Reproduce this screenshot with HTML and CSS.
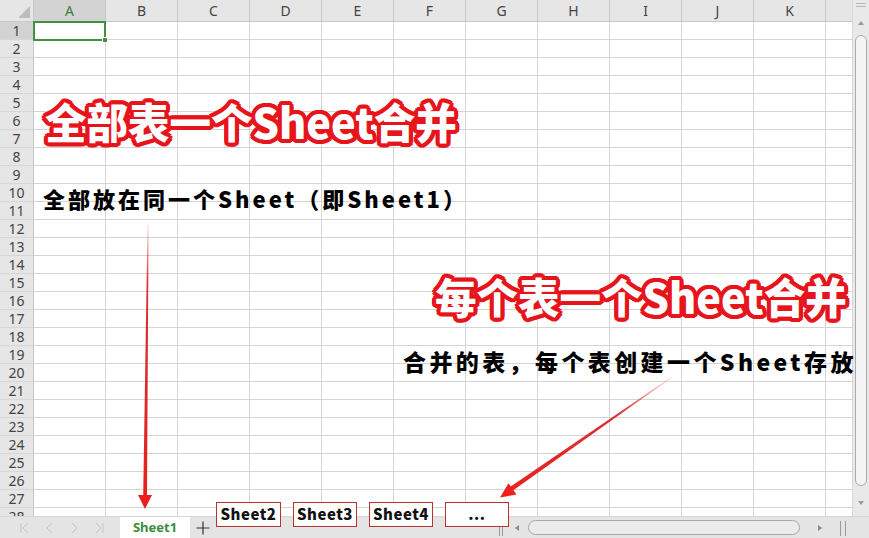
FILE: index.html
```html
<!DOCTYPE html>
<html lang="zh-CN">
<head>
<meta charset="utf-8">
<title>Sheet</title>
<link rel="stylesheet" href="styles.css">
</head>
<body>
<div class="app">
  <div class="main">
    <div class="sheet">
      <div class="corner"><span class="corner-tri"></span></div>
      <div class="col-headers">
        <div class="ch sel">A</div><div class="ch">B</div><div class="ch">C</div><div class="ch">D</div>
        <div class="ch">E</div><div class="ch">F</div><div class="ch">G</div><div class="ch">H</div>
        <div class="ch">I</div><div class="ch">J</div><div class="ch">K</div><div class="ch last"></div>
      </div>
      <div class="row-headers">
        <div class="rh sel">1</div><div class="rh">2</div><div class="rh">3</div><div class="rh">4</div>
        <div class="rh">5</div><div class="rh">6</div><div class="rh">7</div><div class="rh">8</div>
        <div class="rh">9</div><div class="rh">10</div><div class="rh">11</div><div class="rh">12</div>
        <div class="rh">13</div><div class="rh">14</div><div class="rh">15</div><div class="rh">16</div>
        <div class="rh">17</div><div class="rh">18</div><div class="rh">19</div><div class="rh">20</div>
        <div class="rh">21</div><div class="rh">22</div><div class="rh">23</div><div class="rh">24</div>
        <div class="rh">25</div><div class="rh">26</div><div class="rh">27</div><div class="rh">28</div>
      </div>
      <div class="cells">
        <div class="selection"><span class="handle"></span></div>
      </div>
    </div>
    <div class="vscroll">
      <div class="vsplit"></div>
      <div class="varrow up"></div>
      <div class="vthumb"></div>
      <div class="varrow down"></div>
    </div>
  </div>
  <div class="tabbar">
    <div class="nav">
      <svg class="nav-ic" width="25" height="12" viewBox="0 0 25 12"><path d="M9 1v10M16 1l-5 5 5 5" fill="none" stroke="#c6c6c6" stroke-width="1"/></svg>
      <svg class="nav-ic" width="25" height="12" viewBox="0 0 25 12"><path d="M15 1l-5 5 5 5" fill="none" stroke="#c6c6c6" stroke-width="1"/></svg>
      <svg class="nav-ic" width="25" height="12" viewBox="0 0 25 12"><path d="M10 1l5 5-5 5" fill="none" stroke="#c6c6c6" stroke-width="1"/></svg>
      <svg class="nav-ic" width="25" height="12" viewBox="0 0 25 12"><path d="M9 1l5 5-5 5M16 1v10" fill="none" stroke="#c6c6c6" stroke-width="1"/></svg>
    </div>
    <div class="tab active">Sheet1</div>
    <div class="add"><svg width="14" height="14" viewBox="0 0 14 14"><path d="M7 0.5v13M0.5 7h13" stroke="#333" stroke-width="1.2"/></svg></div>
    <div class="spacer"></div>
    <div class="hsplit"></div>
    <div class="harrow left"></div>
    <div class="hthumb"></div>
    <div class="harrow right"></div>
    <div class="hend"></div>
  </div>

  <div class="note title t1">全部表一个Sheet合并</div>
  <div class="note sub s1">全部放在同一个Sheet（即Sheet1）</div>
  <div class="note title t2">每个表一个Sheet合并</div>
  <div class="note sub s2">合并的表，每个表创建一个Sheet存放</div>

  <div class="boxtab b2">Sheet2</div>
  <div class="boxtab b3">Sheet3</div>
  <div class="boxtab b4">Sheet4</div>
  <div class="boxtab b5">...</div>

  <svg class="arrows" width="869" height="538" viewBox="0 0 869 538">
    <defs>
      <linearGradient id="ga" x1="0" y1="225" x2="0" y2="508" gradientUnits="userSpaceOnUse">
        <stop offset="0" stop-color="#e8201c" stop-opacity="0.15"/>
        <stop offset="0.2" stop-color="#d41a1a" stop-opacity="0.9"/>
        <stop offset="1" stop-color="#e8201c"/>
      </linearGradient>
      <linearGradient id="gb" x1="672" y1="377" x2="500" y2="497" gradientUnits="userSpaceOnUse">
        <stop offset="0" stop-color="#e8201c" stop-opacity="0.15"/>
        <stop offset="0.3" stop-color="#d41a1a" stop-opacity="0.9"/>
        <stop offset="1" stop-color="#ee2020"/>
      </linearGradient>
    </defs>
    <polygon fill="url(#ga)" points="147.5,225 148.6,225 147,496 143.2,496"/>
    <polygon fill="#ea1f1c" points="138,495 152,495 145,509"/>
    <polygon fill="url(#gb)" points="672.3,377.3 671.7,376.7 510,487 512.6,490.8"/>
    <polygon fill="#ee2020" points="516.5,494.6 508.5,483.2 500,497.5"/>
  </svg>
</div>
</body>
</html>
```
FILE: styles.css
```css
* { box-sizing: border-box; }
html, body { margin: 0; padding: 0; }
body {
  width: 869px;
  height: 538px;
  overflow: hidden;
  background: #ffffff;
  font-family: "Noto Sans", "Noto Sans CJK SC", sans-serif;
}
.app {
  position: relative;
  width: 869px;
  height: 538px;
  display: flex;
  flex-direction: column;
}
.main {
  height: 516px;
  display: flex;
  overflow: hidden;
}
.sheet {
  width: 852px;
  display: grid;
  grid-template-columns: 34px 1fr;
  grid-template-rows: 22px 1fr;
  overflow: hidden;
}
.corner {
  background: #e6e6e6;
  border-right: 1px solid #c8c8c8;
  border-bottom: 1px solid #c8c8c8;
  position: relative;
}
.corner-tri {
  position: absolute;
  right: 3px;
  bottom: 3px;
  width: 0;
  height: 0;
  border-left: 12px solid transparent;
  border-bottom: 12px solid #bdbdbd;
}
.col-headers {
  display: flex;
  background: #e6e6e6;
  border-bottom: 1px solid #c8c8c8;
}
.ch {
  flex: 0 0 72px;
  border-right: 1px solid #c8c8c8;
  text-align: center;
  font-size: 14px;
  line-height: 21px;
  color: #444;
}
.ch.last { flex: 1 0 26px; border-right: none; }
.ch.sel { background: #d3d3d3; color: #3a7d3a; border-bottom: 2px solid #d3d3d3; }
.row-headers {
  display: flex;
  flex-direction: column;
  background: #e6e6e6;
  border-right: 1px solid #c8c8c8;
}
.rh {
  flex: 0 0 18px;
  height: 18px;
  font-size: 14px;
  line-height: 17px;
  text-align: center;
  color: #444;
  border-bottom: 1px solid #d6d6d6;
}
.rh.sel { background: #d3d3d3; }
.cells {
  position: relative;
  background-image:
    repeating-linear-gradient(to right, transparent 0 71px, #d4d4d4 71px 72px),
    repeating-linear-gradient(to bottom, transparent 0 17px, #d4d4d4 17px 18px);
}
.selection {
  position: absolute;
  left: -1px;
  top: -1px;
  width: 73px;
  height: 20px;
  border: 2px solid #3f9140;
}
.handle {
  position: absolute;
  right: -4px;
  bottom: -4px;
  width: 6px;
  height: 6px;
  background: #3f9140;
  border: 1px solid #fff;
}
.vscroll {
  width: 17px;
  background: #e9e9e9;
  border-left: 1px solid #d8d8d8;
  display: flex;
  flex-direction: column;
  align-items: center;
  padding-top: 3px;
}
.vsplit {
  width: 10px;
  height: 4px;
  border-top: 1px solid #b8b8b8;
  border-bottom: 1px solid #b8b8b8;
  margin-bottom: 14px;
}
.varrow {
  width: 0;
  height: 0;
  border-left: 3px solid transparent;
  border-right: 3px solid transparent;
}
.varrow.up { border-bottom: 4px solid #999; margin-bottom: 10px; }
.varrow.down { border-top: 4px solid #999; margin-top: 15px; }
.vthumb {
  width: 12px;
  height: 451px;
  background: #f4f4f4;
  border: 1px solid #ababab;
  border-radius: 6px;
}
.tabbar {
  height: 22px;
  display: flex;
  align-items: stretch;
  background: #e4e4e4;
  border-top: 1px solid #d6d6d6;
}
.nav {
  width: 120px;
  display: flex;
  align-items: center;
  padding-left: 12px;
}
.nav-ic { display: block; }
.tab {
  width: 70px;
  background: #ffffff;
  text-align: center;
  font-weight: 700;
  font-size: 13px;
  line-height: 21px;
  color: #3b8c3b;
}
.add {
  width: 26px;
  display: flex;
  align-items: center;
  justify-content: center;
}
.add svg { display: block; }
.spacer { flex: 1; }
.hsplit {
  width: 4px;
  margin: 4px 3px 2px;
  border-left: 1px solid #9a9a9a;
  border-right: 1px solid #9a9a9a;
}
.harrow {
  width: 22px;
  display: flex;
  align-items: center;
  justify-content: center;
}
.harrow::before {
  content: "";
  width: 0;
  height: 0;
  border-top: 3px solid transparent;
  border-bottom: 3px solid transparent;
}
.harrow.left::before { border-right: 4px solid #8a8a8a; }
.harrow.right { width: 40px; }
.harrow.right::before { border-left: 4px solid #8a8a8a; }
.hthumb {
  width: 272px;
  margin: 3px 0;
  background: #ebebeb;
  border: 1px solid #a8a8a8;
  border-radius: 8px;
}
.hend {
  width: 6px;
  margin: 4px 23px 2px 0;
  border-left: 1px solid #9a9a9a;
  border-right: 1px solid #9a9a9a;
}
.note {
  position: absolute;
  white-space: nowrap;
  line-height: 1;
  font-family: "Noto Sans CJK SC", "Noto Sans", sans-serif;
}
.title {
  font-size: 41.5px;
  font-weight: 900;
  color: #ffffff;
  text-shadow:
    4px 0 0 #e8141c, -4px 0 0 #e8141c, 0 4px 0 #e8141c, 0 -4px 0 #e8141c,
    3px 3px 0 #e8141c, -3px 3px 0 #e8141c, 3px -3px 0 #e8141c, -3px -3px 0 #e8141c,
    4px 1.5px 0 #e8141c, -4px 1.5px 0 #e8141c, 4px -1.5px 0 #e8141c, -4px -1.5px 0 #e8141c,
    1.5px 4px 0 #e8141c, -1.5px 4px 0 #e8141c, 1.5px -4px 0 #e8141c, -1.5px -4px 0 #e8141c,
    2px 0 0 #e8141c, -2px 0 0 #e8141c, 0 2px 0 #e8141c, 0 -2px 0 #e8141c;
}
.t1 { left: 45px; top: 101px; }
.t2 { left: 435px; top: 276px; }
.sub {
  font-size: 22px;
  font-weight: 900;
  color: #000;
  letter-spacing: 3px;
}
.s1 { left: 43px; top: 187px; }
.s2 { left: 403px; top: 350px; font-size: 23px; letter-spacing: 3.4px; }
.boxtab {
  position: absolute;
  top: 502px;
  height: 25px;
  background: #ffffff;
  border: 1px solid #b83232;
  font-family: "Noto Sans CJK SC", "Noto Sans", sans-serif;
  font-weight: 900;
  font-size: 15px;
  letter-spacing: 0.5px;
  line-height: 21px;
  text-align: center;
  color: #111;
}
.b2 { left: 216px; width: 65px; }
.b3 { left: 293px; width: 64px; }
.b4 { left: 369px; width: 64px; }
.b5 { left: 445px; width: 64px; }
.arrows {
  position: absolute;
  left: 0;
  top: 0;
  pointer-events: none;
}
```
